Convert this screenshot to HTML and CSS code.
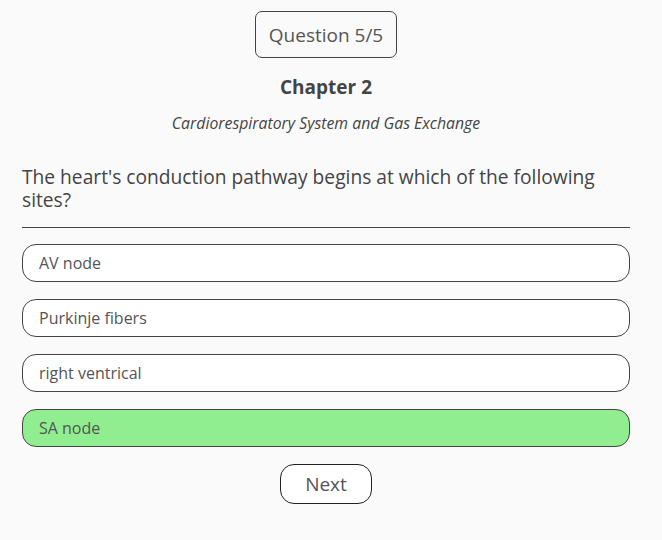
FILE: index.html
```html
<!DOCTYPE html>
<html>
<head>
<meta charset="utf-8">
<link rel="stylesheet" href="styles.css">
</head>
<body>
<main class="quiz">
  <div class="counter">Question 5/5</div>
  <h2 class="chapter">Chapter 2</h2>
  <p class="subtitle">Cardiorespiratory System and Gas Exchange</p>
  <p class="question">The heart's conduction pathway begins at which of the following sites?</p>
  <hr class="divider">
  <div class="options">
    <button class="option">AV node</button>
    <button class="option">Purkinje fibers</button>
    <button class="option">right ventrical</button>
    <button class="option correct">SA node</button>
  </div>
  <button class="next">Next</button>
</main>
</body>
</html>
```
FILE: styles.css
```css
html, body {
  margin: 0;
  padding: 0;
  background: #fafafa;
}
body {
  font-family: "Open Sans", "Noto Sans", sans-serif;
  color: #444;
}
.quiz {
  display: flex;
  flex-direction: column;
  align-items: center;
  padding: 11px 32px 0 22px;
}
.counter {
  border: 1px solid #444;
  border-radius: 7px;
  width: 140px;
  height: 45px;
  display: flex;
  align-items: center;
  justify-content: center;
  font-size: 19px;
  color: #555;
}
.chapter {
  margin: 17px 0 0;
  font-size: 19px;
  font-weight: bold;
  line-height: 24px;
}
.subtitle {
  margin: 14px 0 0;
  font-style: italic;
  font-size: 15.8px;
  line-height: 20px;
}
.question {
  align-self: stretch;
  margin: 32px 0 0;
  font-size: 19.2px;
  line-height: 23px;
}
.divider {
  align-self: stretch;
  border: 0;
  border-top: 1px solid #444;
  margin: 16px 0 0;
}
.options {
  align-self: stretch;
  display: flex;
  flex-direction: column;
  gap: 17px;
  margin-top: 16px;
}
.option {
  height: 38px;
  border: 1px solid #444;
  border-radius: 14px;
  background: #fff;
  text-align: left;
  padding: 0 16px;
  font-family: inherit;
  font-size: 16px;
  color: #555;
}
.option.correct {
  background: #90ee90;
}
.next {
  margin-top: 17px;
  width: 92px;
  height: 40px;
  border: 1px solid #222;
  border-radius: 14px;
  background: #fff;
  font-family: inherit;
  font-size: 19px;
  color: #555;
}
```
